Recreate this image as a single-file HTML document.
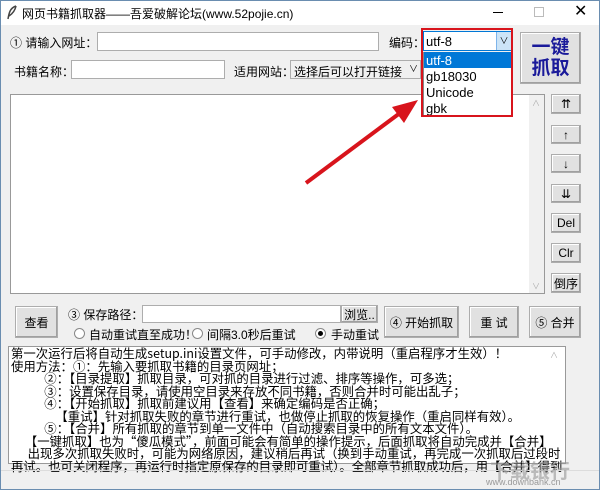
<!DOCTYPE html>
<html><head><meta charset="utf-8"><style>
*{box-sizing:border-box;margin:0;padding:0}
body{width:600px;height:490px;overflow:hidden;background:#f0f0f0;font-family:"Liberation Sans","Noto Sans CJK SC",sans-serif;font-size:12px;color:#000;position:relative}
.a{position:absolute;white-space:nowrap}
.inp{position:absolute;background:#fff;border:1px solid #adadad}
.btn{position:absolute;background:#e1e1e1;border:1px solid #adadad;box-shadow:inset -1px -1px 0 #a0a0a0,inset 1px 1px 0 #fff;display:flex;align-items:center;justify-content:center;font-size:12px}
.r{position:absolute;width:11px;height:11px;border:1px solid #888;border-radius:50%;background:#fff}
.z{z-index:10}
</style></head><body>
<div class="a" style="left:0;top:0;width:600px;height:25px;background:#fff;border:1px solid #6a8db0;border-bottom:none"></div>
<div class="a" style="left:0;top:0;width:1px;height:490px;background:#6a8db0"></div>
<div class="a" style="left:599px;top:0;width:1px;height:490px;background:#6a8db0"></div>
<div class="a" style="left:0;top:489px;width:600px;height:1px;background:#6a8db0"></div>
<svg class="a" style="left:6px;top:5px" width="12" height="15"><path d="M10 1 C4 3 3 8 2 14 M10 1 C9 6 6 9 3 11" stroke="#444" fill="none" stroke-width="1.5"/></svg>
<div class="a" style="left:22px;top:5px;font-size:12px">网页书籍抓取器——吾爱破解论坛(www.52pojie.cn)</div>
<div class="a" style="left:493px;top:12px;width:10px;height:1px;background:#000"></div>
<div class="a" style="left:534px;top:7px;width:10px;height:10px;border:1px solid #bbb"></div>
<div class="a" style="left:574px;top:1px;font-size:16px">✕</div>

<div class="a" style="left:10px;top:34px">① 请输入网址：</div>
<div class="inp" style="left:97px;top:32px;width:282px;height:19px"></div>
<div class="a" style="left:389px;top:34px">编码：</div>
<div class="inp z" style="left:423px;top:31px;width:89px;height:20px;border-color:#0078d7"></div>
<div class="a z" style="left:426px;top:34px;font-size:13px">utf-8</div>
<div class="a z" style="left:496px;top:32px;width:15px;height:18px;background:#cce4f7;border-left:1px solid #7eb4ea;font-size:9px;text-align:center;line-height:18px">∨</div>
<div class="a z" style="left:423px;top:52px;width:89px;height:64px;background:#fff;border:1px solid #888"></div>
<div class="a z" style="left:424px;top:52px;width:87px;height:16px;background:#0078d7"></div>
<div class="a z" style="left:426px;top:53px;font-size:13px;color:#fff">utf-8</div>
<div class="a z" style="left:426px;top:69px;font-size:13px">gb18030</div>
<div class="a z" style="left:426px;top:85px;font-size:13px">Unicode</div>
<div class="a z" style="left:426px;top:101px;font-size:13px">gbk</div>
<div class="a z" style="left:421px;top:28px;width:92px;height:89px;border:2px solid #d8141c"></div>
<div class="btn" style="left:520px;top:32px;width:61px;height:52px;flex-direction:column;font-size:19px;font-weight:bold;color:#1a1a9a;line-height:21px"><span>一键</span><span>抓取</span></div>

<div class="a" style="left:14px;top:63px">书籍名称：</div>
<div class="inp" style="left:71px;top:60px;width:154px;height:19px"></div>
<div class="a" style="left:234px;top:63px">适用网站：</div>
<div class="inp" style="left:290px;top:60px;width:131px;height:19px;background:#f0f0f0"></div>
<div class="a" style="left:294px;top:63px">选择后可以打开链接</div>
<div class="a" style="left:409px;top:62px;font-size:9px">∨</div>

<div class="inp" style="left:10px;top:94px;width:535px;height:200px;border-color:#999"></div>
<div class="a" style="left:529px;top:95px;width:15px;height:198px;background:#f0f0f0"></div>
<div class="a" style="left:532px;top:98px;font-size:8px;color:#aaa">∧</div>
<div class="a" style="left:532px;top:281px;font-size:8px;color:#aaa">∨</div>
<div class="btn" style="left:551px;top:94px;width:30px;height:20px">⇈</div>
<div class="btn" style="left:551px;top:125px;width:30px;height:19px">↑</div>
<div class="btn" style="left:551px;top:154px;width:30px;height:19px">↓</div>
<div class="btn" style="left:551px;top:184px;width:30px;height:19px">⇊</div>
<div class="btn" style="left:551px;top:213px;width:30px;height:20px">Del</div>
<div class="btn" style="left:551px;top:243px;width:30px;height:20px">Clr</div>
<div class="btn" style="left:551px;top:273px;width:30px;height:20px">倒序</div>

<svg class="a" style="left:300px;top:95px" width="125" height="95"><line x1="6" y1="88" x2="100" y2="18" stroke="#d8141c" stroke-width="4"/><polygon points="118,5 92,12 104,28" fill="#d8141c"/></svg>

<div class="btn" style="left:15px;top:306px;width:43px;height:32px">查看</div>
<div class="a" style="left:68px;top:306px">③ 保存路径：</div>
<div class="inp" style="left:142px;top:305px;width:199px;height:18px"></div>
<div class="btn" style="left:341px;top:305px;width:37px;height:18px">浏览..</div>
<div class="r" style="left:74px;top:328px"></div><div class="a" style="left:89px;top:326px">自动重试直至成功！</div>
<div class="r" style="left:192px;top:328px"></div><div class="a" style="left:207px;top:326px">间隔3.0秒后重试</div>
<div class="r" style="left:315px;top:328px"></div><div class="a" style="left:318px;top:331px;width:5px;height:5px;border-radius:50%;background:#000"></div><div class="a" style="left:331px;top:326px">手动重试</div>
<div class="btn" style="left:384px;top:306px;width:75px;height:32px">④ 开始抓取</div>
<div class="btn" style="left:469px;top:306px;width:50px;height:32px">重 试</div>
<div class="btn" style="left:529px;top:306px;width:52px;height:32px">⑤ 合并</div>

<div class="inp" style="left:8px;top:346px;width:558px;height:118px;border-color:#999;overflow:hidden"></div>
<div class="a" style="left:550px;top:350px;font-size:8px;color:#aaa">∧</div>
<div class="a" style="left:11px;top:347px;font-family:'Noto Sans CJK SC',sans-serif;font-size:12.4px;line-height:12.5px;white-space:pre">第一次运行后将自动生成setup.ini设置文件，可手动修改，内带说明（重启程序才生效）！
使用方法：①：先输入要抓取书籍的目录页网址；
            ②：【目录提取】抓取目录，可对抓的目录进行过滤、排序等操作，可多选；
            ③：设置保存目录，请使用空目录来存放不同书籍，否则合并时可能出乱子；
            ④：【开始抓取】抓取前建议用【查看】来确定编码是否正确；
                【重试】针对抓取失败的章节进行重试，也做停止抓取的恢复操作（重启同样有效）。
            ⑤：【合并】所有抓取的章节到单一文件中（自动搜索目录中的所有文本文件）。
     【一键抓取】也为“傻瓜模式”，前面可能会有简单的操作提示，后面抓取将自动完成并【合并】
      出现多次抓取失败时，可能为网络原因，建议稍后再试（换到手动重试，再完成一次抓取后过段时
再试。也可关闭程序，再运行时指定原保存的目录即可重试）。全部章节抓取成功后，用【合并】得到</div>
<div class="a" style="left:1px;top:470px;width:598px;height:1px;background:#dcdcdc"></div>
<div class="a" style="left:490px;top:455px;font-size:20px;color:rgba(150,150,150,.6);font-weight:bold">下载银行</div>
<div class="a" style="left:486px;top:477px;font-size:9px;color:#999">www.downbank.cn</div>
</body></html>
